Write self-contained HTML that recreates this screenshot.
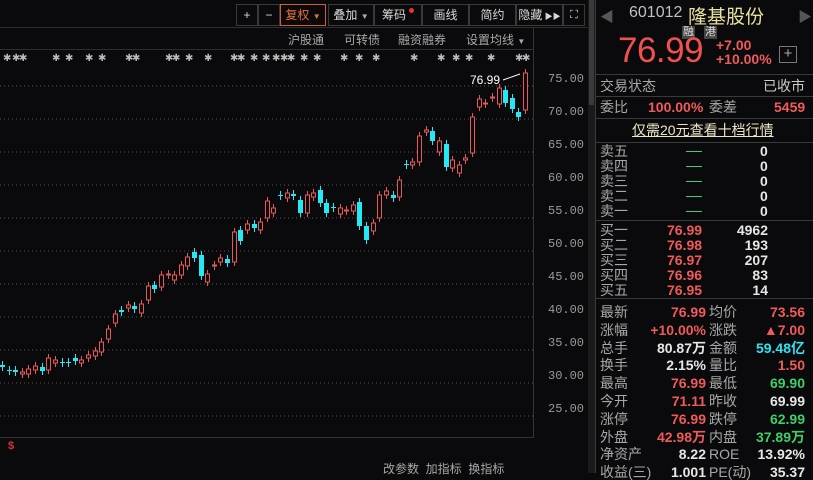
<!DOCTYPE html>
<html><head><meta charset="utf-8">
<style>
*{margin:0;padding:0;box-sizing:border-box}
body{width:813px;height:473px;background:#0a0a0c;overflow:hidden;position:relative;font-family:"Liberation Sans","Noto Sans CJK SC",sans-serif;color:#c8c8c8}
.a{position:absolute;white-space:nowrap}
.tb{position:absolute;top:4px;height:22px;border:1px solid #3a3a3a;font-size:12px;color:#d8d8d8;text-align:center;line-height:20px}
.r{color:#f05a5a}.g{color:#3ccf6a}.c{color:#2fe3f0}.w{color:#e6e6e6}.l{color:#a8a8a8}
.rp{font-size:14px;line-height:16px}
.v{font-weight:bold}
.hl{position:absolute;left:596px;width:217px;height:1px;background:#3a3a3a}
</style></head><body>
<div class="tb" style="left:236px;width:22px">+</div>
<div class="tb" style="left:258px;width:22px">−</div>
<div class="tb" style="left:280px;width:46px;border-color:#d06030;color:#e8703a">复权 <span style="font-size:8px">▼</span></div>
<div class="tb" style="left:328px;width:46px">叠加 <span style="font-size:8px;color:#aaa">▼</span></div>
<div class="tb" style="left:374px;width:48px">筹码<span style="display:inline-block;width:5px;height:5px;border-radius:50%;background:#f03030;vertical-align:top;margin:3px 0 0 3px"></span></div>
<div class="tb" style="left:422px;width:47px">画线</div>
<div class="tb" style="left:469px;width:47px">简约</div>
<div class="tb" style="left:516px;width:47px">隐藏<span style="font-size:8px"> ▶▶</span></div>
<div class="tb" style="left:563px;width:22px;font-size:11px">⛶</div>
<div class="a" style="left:0;top:27px;width:588px;height:1px;background:#2e2e2e"></div>
<div class="a" style="left:0;top:49px;width:533px;height:1px;background:#2e2e2e"></div>
<div class="a l" style="left:288px;top:31px;font-size:12px">沪股通</div>
<div class="a l" style="left:344px;top:31px;font-size:12px">可转债</div>
<div class="a l" style="left:398px;top:31px;font-size:12px">融资融券</div>
<div class="a l" style="left:466px;top:31px;font-size:12px">设置均线 <span style="font-size:8px">▼</span></div>
<div class="a" style="left:533px;top:28px;width:1px;height:410px;background:#333"></div>
<div class="a" style="left:0;top:437px;width:533px;height:1px;background:#333"></div>
<div class="a" style="left:588px;top:0;width:7px;height:473px;background:#1a1a1a"></div>
<div class="a" style="left:589px;top:0;width:5px;height:105px;background:#3a3a3a"></div>
<div class="a" style="left:8px;top:440px;font-size:11px;color:#e03030;font-weight:bold">$</div>
<div class="a l" style="left:383px;top:460px;font-size:12px">改参数 &nbsp;加指标 &nbsp;换指标</div>
<svg class="a" style="left:0;top:0" width="588" height="473" id="ch"></svg>
<div class="a l" style="left:548px;top:79px;font-size:12px;font-family:'Liberation Mono',monospace;color:#9a9a9a" id="ax"></div>
<div class="a" style="left:595px;top:0;width:1px;height:473px;background:#3a3a3a"></div>
<div class="a" style="left:600px;top:7px;font-size:14px;color:#555">◀</div>
<div class="a" style="left:798px;top:7px;font-size:14px;color:#555">▶</div>
<div class="a" style="left:629px;top:4px;font-size:16px;color:#c0c0c0">601012</div>
<div class="a" style="left:688px;top:2px;font-size:19px;color:#e8e0a0">隆基股份</div>
<div class="a" style="left:682px;top:26px;font-size:11px;line-height:13px;color:#ddd;background:#444;padding:0 1px">融</div>
<div class="a" style="left:704px;top:26px;font-size:11px;line-height:13px;color:#ddd;background:#444;padding:0 1px">港</div>
<div class="a r" style="left:618px;top:36px;font-size:35px;line-height:30px;color:#f05050;letter-spacing:-0.5px">76.99</div>
<div class="a r" style="left:716px;top:38px;font-size:14px;line-height:14px;font-weight:bold">+7.00<br>+10.00%</div>
<div class="a" style="left:779px;top:46px;width:18px;height:17px;border:1px solid #777;color:#aaa;font-size:15px;line-height:14px;text-align:center">+</div>
<div class="hl" style="top:74px"></div>
<div class="a l rp" style="left:600px;top:78px">交易状态</div>
<div class="a w rp" style="left:763px;top:78px;color:#ccc">已收市</div>
<div class="hl" style="top:96px"></div>
<div class="a l rp" style="left:600px;top:99px">委比</div>
<div class="a r rp v" style="left:648px;top:99px">100.00%</div>
<div class="a l rp" style="left:709px;top:99px">委差</div>
<div class="a r rp v" style="left:774px;top:99px">5459</div>
<div class="hl" style="top:118px"></div>
<div class="a rp" style="left:632px;top:122px;color:#ece6c8;text-decoration:underline">仅需20元查看十档行情</div>
<div class="hl" style="top:142px"></div>
<div id="ob"></div>
<div class="hl" style="top:298px"></div>
<div id="st"></div>
<script>
var ob='',L=['卖五','卖四','卖三','卖二','卖一'];
for(var i=0;i<5;i++){var y=144+i*15;ob+='<div class="a l rp" style="left:600px;top:'+y+'px;line-height:15px">'+L[i]+'</div><div class="a g" style="left:686px;top:'+(y+7)+'px;width:16px;height:1px;background:#3ccf6a"></div><div class="a w rp v" style="left:760px;top:'+y+'px;line-height:15px">0</div>';}
var B=[['买一','76.99','4962'],['买二','76.98','193'],['买三','76.97','207'],['买四','76.96','83'],['买五','76.95','14']];
for(i=0;i<5;i++){y=223+i*15;ob+='<div class="a l rp" style="left:600px;top:'+y+'px;line-height:15px">'+B[i][0]+'</div><div class="a r rp v" style="left:667px;top:'+y+'px;line-height:15px">'+B[i][1]+'</div><div class="a w rp v" style="right:45px;top:'+y+'px;line-height:15px">'+B[i][2]+'</div>';}
ob+='<div class="hl" style="top:220px"></div>';
document.getElementById('ob').innerHTML=ob;
var S=[['最新','76.99','r','均价','73.56','r'],['涨幅','+10.00%','r','涨跌','▲7.00','r'],['总手','80.87万','w','金额','59.48亿','c'],['换手','2.15%','w','量比','1.50','r'],['最高','76.99','r','最低','69.90','g'],['今开','71.11','r','昨收','69.99','w'],['涨停','76.99','r','跌停','62.99','g'],['外盘','42.98万','r','内盘','37.89万','g'],['净资产','8.22','w','ROE','13.92%','w'],['收益(三)','1.001','w','PE(动)','35.37','w']];
var s='';
for(i=0;i<S.length;i++){y=304+i*17.8;s+='<div class="a l rp" style="left:600px;top:'+y+'px">'+S[i][0]+'</div><div class="a rp v '+S[i][2]+'" style="right:107px;top:'+y+'px">'+S[i][1]+'</div><div class="a l rp" style="left:709px;top:'+y+'px">'+S[i][3]+'</div><div class="a rp v '+S[i][5]+'" style="right:8px;top:'+y+'px">'+S[i][4]+'</div>';}
document.getElementById('st').innerHTML=s;
var ax='';for(var p=75;p>=25;p-=5){var yy=86+(75-p)*6.6;ax+='<div style="position:absolute;left:0;top:'+(yy-86-7)+'px">'+p.toFixed(2)+'</div>';}
document.getElementById('ax').innerHTML=ax;
var D=[[365,367,'c'],[370,371,'c'],[370,372,'c'],[372,374,'r'],[369,374,'r'],[366,370,'r'],[367,371,'c'],[358,370,'r'],[360,363,'r'],[362,363,'c'],[362,363,'c'],[358,361,'c'],[360,363,'r'],[355,358,'r'],[351,356,'r'],[342,352,'r'],[329,339,'r'],[314,323,'r'],[310,312,'c'],[305,308,'r'],[306,309,'c'],[304,313,'r'],[286,300,'r'],[285,289,'c'],[275,287,'r'],[274,275,'r'],[275,280,'r'],[265,275,'r'],[257,266,'r'],[252,258,'c'],[255,276,'c'],[274,282,'r'],[265,266,'r'],[258,262,'r'],[259,263,'c'],[232,262,'r'],[230,241,'c'],[224,230,'r'],[224,228,'c'],[222,230,'r'],[201,218,'r'],[208,213,'r'],[195,196,'c'],
[193,198,'r'],[194,196,'c'],[200,213,'c'],[195,213,'r'],[193,197,'r'],[190,203,'c'],[203,213,'c'],[207,208,'c'],[208,214,'r'],[210,211,'r'],[205,211,'r'],[202,226,'c'],[226,240,'c'],[223,231,'r'],[195,218,'r'],[191,195,'r'],[195,198,'c'],[180,197,'r'],[164,165,'c'],[162,165,'r'],[136,162,'r'],[130,132,'r'],[131,141,'c'],[141,152,'r'],[144,167,'c'],[160,168,'r'],[165,173,'r'],[158,160,'r'],[117,153,'r'],[99,107,'r'],[103,104,'r'],[97,98,'r'],[88,104,'r'],[90,103,'c'],[98,109,'c'],[112,117,'c'],[73,110,'r']];
var sv='';
for(p=75;p>=25;p-=5){yy=86+(75-p)*6.6;sv+='<line x1="0" x2="533" y1="'+yy+'" y2="'+yy+'" stroke="#555" stroke-dasharray="1 3"/>';}
for(i=0;i<D.length;i++){var d=D[i],x=Math.round(i*6.62)+0.5,col=d[2]=='r'?'#e8585a':'#25e8f5';var h=d[1]-d[0];if(h<1)h=1;
sv+='<line x1="'+(x+2)+'" x2="'+(x+2)+'" y1="'+(d[0]-4)+'" y2="'+(d[1]+4)+'" stroke="'+col+'"/>';
if(d[2]=='r')sv+='<rect x="'+x+'" y="'+d[0]+'" width="4" height="'+h+'" fill="#0a0a0c" stroke="'+col+'"/>';else sv+='<rect x="'+(x-0.5)+'" y="'+d[0]+'" width="5" height="'+h+'" fill="'+col+'"/>';}
var stars=[3,12,19,52,65,85,98,125,132,165,172,185,204,230,237,250,262,272,280,287,300,313,340,355,372,410,437,452,465,487,515,522];
for(i=0;i<stars.length;i++)sv+='<text x="'+stars[i]+'" y="61" fill="#bbb" font-size="10" font-family="Liberation Sans">✱</text>';
sv+='<text x="470" y="84" fill="#fff" font-size="12" font-family="Liberation Sans">76.99</text><line x1="503" y1="80" x2="520" y2="74" stroke="#fff"/>';
document.getElementById('ch').innerHTML=sv;
</script>
</body></html>
